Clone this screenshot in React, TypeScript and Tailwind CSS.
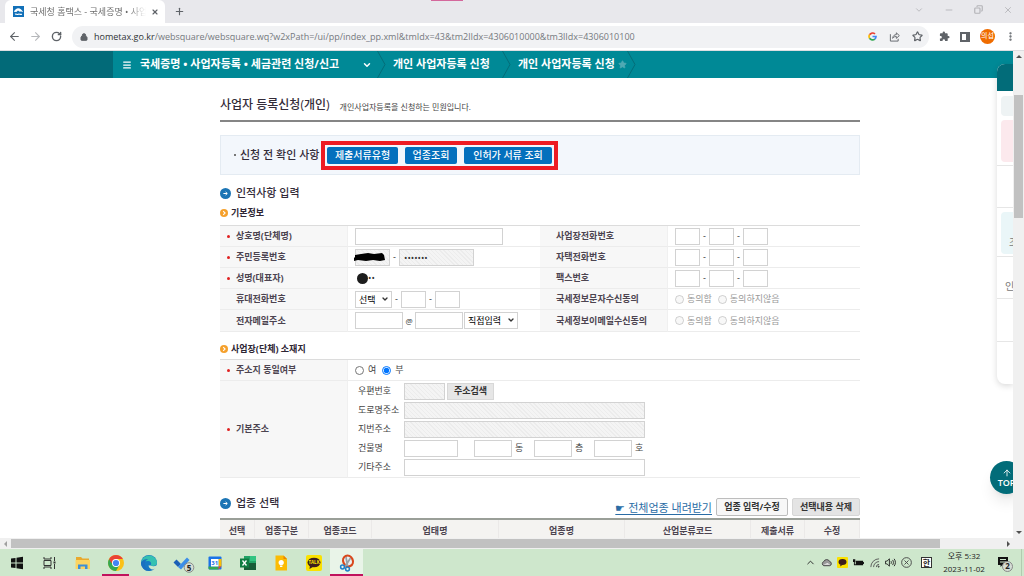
import type { ReactNode } from "react"
import { ArrowLeft, ArrowRight, RotateCw, Star, Puzzle, MoreVertical, ChevronDown, ChevronUp, Minus, Copy, X, Plus, Menu, Lock, ArrowUp } from "lucide-react"

const HATCH = "bg-[repeating-linear-gradient(45deg,#f4f4f4_0px,#f4f4f4_2px,#ececec_2px,#ececec_3px)]"

const crumbs = ["개인 사업자등록 신청", "개인 사업자등록 신청"]

const guideButtons = [
  { name: "제출서류유형", width: "w-[71px]" },
  { name: "업종조회", width: "w-[52px]" },
  { name: "인허가 서류 조회", width: "w-[88px]" },
]

const columns = [
  { name: "선택", width: "w-[35px]" },
  { name: "업종구분", width: "w-[54px]" },
  { name: "업종코드", width: "w-[63px]" },
  { name: "업태명", width: "w-[127px]" },
  { name: "업종명", width: "w-[126px]" },
  { name: "산업분류코드", width: "w-[126px]" },
  { name: "제출서류", width: "w-[54px]" },
  { name: "수정", width: "w-[55px]" },
]

function TextBox({ label, className = "", filled = false, value, type = "text" }: { label: string; className?: string; filled?: boolean; value?: string; type?: string }) {
  return (
    <input
      type={type}
      aria-label={label}
      readOnly={filled}
      defaultValue={value}
      className={`h-[17px] shrink-0 border border-[#d2d2d2] px-1 text-[9px] text-[#333] outline-none ${filled ? HATCH : "bg-white"} ${className}`}
    />
  )
}

function Dropdown({ label, option, className }: { label: string; option: string; className: string }) {
  return (
    <div className={`relative shrink-0 ${className}`}>
      <select aria-label={label} className="block h-[17px] w-full appearance-none border border-[#d2d2d2] bg-white pl-[3px] text-[9px] leading-[15px] text-black outline-none">
        <option>{option}</option>
      </select>
      <ChevronDown className="pointer-events-none absolute top-1 right-[3px] size-2" strokeWidth={4} />
    </div>
  )
}

function Dash() {
  return <span className="w-[9px] shrink-0 text-center">-</span>
}

function PhoneBoxes({ label }: { label: string }) {
  return (
    <div className="flex items-center">
      <TextBox label={`${label} 앞자리`} className="w-[25px]" />
      <Dash />
      <TextBox label={`${label} 가운데`} className="w-[25px]" />
      <Dash />
      <TextBox label={`${label} 뒷자리`} className="w-[25px]" />
    </div>
  )
}

function Agreement({ name }: { name: string }) {
  return (
    <div className="flex items-center gap-[6px] text-[#999]">
      {["동의함", "동의하지않음"].map((text) => (
        <label key={text} className="flex items-center gap-[3px]">
          <input type="radio" name={name} disabled className="size-[9px]" />
          {text}
        </label>
      ))}
    </div>
  )
}

function Th({ children, required = false, height = "h-[21px]" }: { children: ReactNode; required?: boolean; height?: string }) {
  return (
    <th scope="row" className={`w-1/5 border-r border-b border-r-[#f0f0f0] border-b-[#ececec] bg-[#f7f7f7] p-0 text-left font-bold text-[#4c4450] ${height}`}>
      <div className="flex items-center">
        <span className="flex w-4 justify-center">{required && <i className="size-[3px] rounded-full bg-[#e02020]" />}</span>
        {children}
      </div>
    </th>
  )
}

function Td({ children }: { children: ReactNode }) {
  return <td className="w-[30%] border-b border-[#ececec] py-0 pr-0 pl-[7px]">{children}</td>
}

function SectionTitle({ children }: { children: ReactNode }) {
  return (
    <h2 className="flex h-4 items-center gap-[5px] text-[11px] font-medium text-[#332b38]">
      <svg viewBox="0 0 11 11" className="size-[11px]">
        <circle cx="5.5" cy="5.5" r="5.5" fill="#1c75b5" />
        <path d="M3.4 5.5h3.6M5.6 4l1.7 1.5L5.600 7" stroke="#fff" fill="none" strokeWidth="1" />
      </svg>
      {children}
    </h2>
  )
}

function SubTitle({ children }: { children: ReactNode }) {
  return (
    <h3 className="flex h-4 items-center gap-[3px] text-[9px] font-bold text-[#2d2533]">
      <svg viewBox="0 0 8 8" className="size-2">
        <circle cx="4" cy="4" r="4" fill="#f5a02c" />
        <path d="M3.2 2.1 5.1 4 3.2 5.9" stroke="#fff" fill="none" strokeWidth="1.1" />
      </svg>
      {children}
    </h3>
  )
}

function BrowserChrome() {
  return (
    <header className="shrink-0 text-[#5f6368]">
      <div className="relative flex h-[23px] items-center bg-[#e8e8ec] pl-[5px]">
        <i className="absolute top-0 left-[431px] h-px w-8 bg-[#d4689c]" />
        <div className="flex h-full w-[160px] items-center rounded-t-md bg-white pr-[6px] pl-2">
          <svg viewBox="0 0 11 11" className="size-[11px] shrink-0">
            <rect width="11" height="11" fill="#1270b8" />
            <path d="M.8 5.800C2 3.500 3.500 2.200 5.200 2.200c2 0 3.500 1.600 5 4-1.400-.9-2.400-1-3.400-.4L5 4.600 3.400 6z" fill="#fff" />
            <path d="M2 8.300c1.200-.8 2 .8 3.200 0s2 .6 3.800 0" stroke="#fff" fill="none" strokeWidth="1.200" />
          </svg>
          <span className="ml-[6px] min-w-0 flex-1 overflow-hidden bg-linear-to-r from-[#666] from-85% to-transparent bg-clip-text text-[9px] whitespace-nowrap text-transparent">국세청 홈택스 - 국세증명 • 사업</span>
          <button type="button" aria-label="탭 닫기" className="ml-[5px]">
            <X className="size-2" strokeWidth={3.5} />
          </button>
        </div>
        <button type="button" aria-label="새 탭" className="ml-[9px]">
          <Plus className="size-[11px]" strokeWidth={2.5} />
        </button>
        <div className="ml-auto flex gap-5 pr-[11px] pb-1 text-[#b2b2b6]">
          <button type="button" aria-label="탭 검색"><ChevronDown className="size-[10px]" /></button>
          <button type="button" aria-label="최소화"><Minus className="size-[10px]" /></button>
          <button type="button" aria-label="이전 크기로"><Copy className="size-[9px] -scale-x-100" strokeWidth={3} /></button>
          <button type="button" aria-label="닫기"><X className="size-[10px]" /></button>
        </div>
      </div>
      <div className="flex h-7 items-center border-b border-[#dcdee1] bg-white pr-[10px] pl-2">
        <div className="flex gap-2">
          <button type="button" aria-label="뒤로"><ArrowLeft className="size-[13px]" /></button>
          <button type="button" aria-label="앞으로" className="text-[#b6b8bb]"><ArrowRight className="size-[13px]" /></button>
          <button type="button" aria-label="새로고침"><RotateCw className="size-[13px] p-px" strokeWidth={3} /></button>
        </div>
        <div className="ml-[9px] flex h-[22px] min-w-0 flex-1 items-center rounded-full bg-[#f1f2f4] pr-[6px] pl-2">
          <Lock className="size-2 shrink-0" strokeWidth={3} fill="currentColor" />
          <p className="ml-[6px] min-w-0 flex-1 truncate text-[9px] text-[#75797e]">
            <span className="text-[#303236]">hometax.go.kr</span>/websquare/websquare.wq?w2xPath=/ui/pp/index_pp.xml&amp;tmIdx=43&amp;tm2lIdx=4306010000&amp;tm3lIdx=4306010100
          </p>
          <div className="flex items-center gap-3">
            <svg viewBox="0 0 18 18" className="size-[9px]" fill="none" strokeWidth="3.4">
              <path d="M3.1 5.5A7 7 0 0 1 14 4" stroke="#ea4335" />
              <path d="M3.1 5.5a7 7 0 0 0 0 7" stroke="#fbbc05" />
              <path d="M3.1 12.5A7 7 0 0 0 13.6 14.2" stroke="#34a853" />
              <path d="M9 9h7a7 7 0 0 1-2.4 5.2" stroke="#4285f4" />
            </svg>
            <button type="button" aria-label="공유">
              <svg viewBox="0 0 12 12" className="size-[11px]" fill="none" stroke="currentColor" strokeWidth="1">
                <path d="M1.5 3.5v7.5h8.5V8.5M4 8c.3-3 2-4 4-4V2l3.3 3L8 8V6C6 6 5 6.500 4 8z" />
              </svg>
            </button>
            <button type="button" aria-label="북마크"><Star className="size-[11px]" strokeWidth={2.6} /></button>
          </div>
        </div>
        <div className="ml-[10px] flex items-center gap-[10px]">
          <button type="button" aria-label="확장 프로그램">
            <svg viewBox="0 0 24 24" className="size-[11px]" fill="currentColor">
              <path d="M20.500 11H19V7a2 2 0 0 0-2-2h-4V3.500a2.500 2.500 0 0 0-5 0V5H4a2 2 0 0 0-2 2v3.800h1.500a2.700 2.700 0 0 1 0 5.400H2V20a2 2 0 0 0 2 2h3.800v-1.500a2.700 2.700 0 0 1 5.400 0V22H17a2 2 0 0 0 2-2v-4h1.500a2.500 2.500 0 0 0 0-5z" />
            </svg>
          </button>
          <button type="button" aria-label="측면 패널" className="h-[10px] w-[10px] border-2 border-r-4 border-[#5f6368]" />
          <button type="button" aria-label="프로필" className="flex size-[15px] items-center justify-center rounded-full bg-[#ef6c00] text-[7px] text-white">의섭</button>
          <button type="button" aria-label="메뉴"><MoreVertical className="-mr-[2px] size-[11px]" strokeWidth={3} /></button>
        </div>
      </div>
    </header>
  )
}

function Slash() {
  return (
    <svg viewBox="0 0 9 27" className="h-[27px] w-[9px] shrink-0" fill="none">
      <path d="M.5 0 8 13.500.5 27" stroke="#046c78" />
    </svg>
  )
}

function Breadcrumb() {
  return (
    <nav className="flex h-[27px] items-center bg-[#008996] text-[11px] font-bold text-white">
      <div className="h-full w-[113px] shrink-0 bg-[#026a78]" />
      <button type="button" aria-label="전체 메뉴" className="ml-[9px]">
        <Menu className="size-[10px]" strokeWidth={3} />
      </button>
      <a href="#menu" className="ml-2 flex flex-[0_0_232px] items-center justify-between">
        국세증명 • 사업자등록 • 세금관련 신청/신고
        <ChevronDown className="size-[10px]" strokeWidth={3.5} />
      </a>
      <span className="ml-[5px] flex"><Slash /></span>
      {crumbs.map((crumb, i) => (
        <div key={i} className="flex items-center">
          <a href="#crumb" className="flex w-[116px] items-center justify-between pl-[7px] whitespace-nowrap">
            {crumb}
            {i === 1 && <Star className="size-[9px] text-[#4fa9b3]" fill="currentColor" />}
          </a>
          <Slash />
        </div>
      ))}
    </nav>
  )
}

function BasicInfo() {
  return (
    <table className="mt-1 w-full table-fixed border-separate border-spacing-0 border-t border-[#dcdcdc] text-[9px] leading-3">
      <tbody>
        <tr>
          <Th required>상호명(단체명)</Th>
          <Td><TextBox label="상호명(단체명)" className="block w-[148px]" /></Td>
          <Th>사업장전화번호</Th>
          <Td><PhoneBoxes label="사업장전화번호" /></Td>
        </tr>
        <tr>
          <Th required>주민등록번호</Th>
          <Td>
            <div className="relative flex items-center">
              <TextBox label="주민등록번호 앞자리" filled className="w-[35px]" />
              <svg viewBox="0 0 32 10" className="absolute left-[-1px] h-[10px] w-8">
                <path d="M1 3 7 2l7-1 6 1 8-1 2 2 1 5-5 1-7-1-7 1-8-1-4 1-1-2 2-2z" fill="#000" />
              </svg>
              <Dash />
              <TextBox label="주민등록번호 뒷자리" filled value="•••••••" className="w-[75px]" />
            </div>
          </Td>
          <Th>자택전화번호</Th>
          <Td><PhoneBoxes label="자택전화번호" /></Td>
        </tr>
        <tr>
          <Th required>성명(대표자)</Th>
          <Td>
            <div className="flex items-center pl-[2px]">
              <i className="size-[11px] rounded-full bg-[#1d1d1d]" />
              <span>••</span>
            </div>
          </Td>
          <Th>팩스번호</Th>
          <Td><PhoneBoxes label="팩스번호" /></Td>
        </tr>
        <tr>
          <Th>휴대전화번호</Th>
          <Td>
            <div className="flex items-center">
              <Dropdown label="휴대전화 국번" option="선택" className="w-[37px]" />
              <Dash />
              <TextBox label="휴대전화번호 가운데" className="w-[25px]" />
              <Dash />
              <TextBox label="휴대전화번호 뒷자리" className="w-[25px]" />
            </div>
          </Td>
          <Th>국세정보문자수신동의</Th>
          <Td><Agreement name="sms" /></Td>
        </tr>
        <tr>
          <Th height="h-[22px]">전자메일주소</Th>
          <Td>
            <div className="flex items-center">
              <TextBox label="전자메일 아이디" className="w-12" />
              <span className="w-3 text-center text-[8px]">@</span>
              <TextBox label="전자메일 도메인" className="w-12" />
              <Dropdown label="도메인 선택" option="직접입력" className="ml-px w-[54px]" />
            </div>
          </Td>
          <Th height="h-[22px]">국세정보이메일수신동의</Th>
          <Td><Agreement name="mail" /></Td>
        </tr>
      </tbody>
    </table>
  )
}

function AddressRow({ label, children }: { label: string; children: ReactNode }) {
  return (
    <div className="flex items-center">
      <span className="w-[46px] shrink-0">{label}</span>
      {children}
    </div>
  )
}

function AddressTable() {
  return (
    <table className="mt-[2px] w-full table-fixed border-separate border-spacing-0 border-t border-[#dcdcdc] text-[9px] leading-3 text-[#444]">
      <tbody>
        <tr>
          <Th required>주소지 동일여부</Th>
          <td className="border-b border-[#ececec] py-0 pr-0 pl-[7px]">
            <div className="flex gap-[6px]">
              <label className="flex items-center gap-1"><input type="radio" name="same" className="size-[9px]" />여</label>
              <label className="flex items-center gap-1"><input type="radio" name="same" defaultChecked className="size-[9px]" />부</label>
            </div>
          </td>
        </tr>
        <tr>
          <Th required height="h-[97px]">기본주소</Th>
          <td className="border-b border-[#ececec] py-0 pr-0 pl-[10px]">
            <div className="flex flex-col gap-[2px]">
              <AddressRow label="우편번호">
                <TextBox label="우편번호" filled className="w-[41px]" />
                <button type="button" className="ml-[2px] h-[17px] w-[47px] border border-[#d8d8d8] bg-[#e6e6e6] font-bold text-[#333]">주소검색</button>
              </AddressRow>
              <AddressRow label="도로명주소"><TextBox label="도로명주소" filled className="w-[241px]" /></AddressRow>
              <AddressRow label="지번주소"><TextBox label="지번주소" filled className="w-[241px]" /></AddressRow>
              <AddressRow label="건물명">
                <TextBox label="건물명" className="mr-4 w-[54px]" />
                {["동", "층", "호"].map((unit) => (
                  <label key={unit} className="flex w-[60px] items-center gap-[3px]">
                    <input type="text" className="h-[17px] w-[38px] border border-[#d2d2d2] bg-white" />
                    {unit}
                  </label>
                ))}
              </AddressRow>
              <AddressRow label="기타주소"><TextBox label="기타주소" className="w-[241px]" /></AddressRow>
            </div>
          </td>
        </tr>
      </tbody>
    </table>
  )
}

function Content() {
  return (
    <main className="w-full max-w-[860px] pl-[220px]">
      <div className="flex h-11 items-center gap-[10px] border-b-2 border-[#858585] pt-3 text-[#332b38]">
        <h1 className="text-xs font-medium">사업자 등록신청(개인)</h1>
        <p className="pt-[3px] text-[8px] text-[#444]">개인사업자등록을 신청하는 민원입니다.</p>
      </div>

      <div className="mt-[13px] flex h-10 items-center border border-[#e4ebf2] bg-[#f3f7fc] pl-[13px] text-[11px] font-medium text-[#332b38]">
        <i className="mr-1 size-[2px] bg-[#777]" />
        <span className="w-20 whitespace-nowrap">신청 전 확인 사항</span>
        <div className="ml-px flex gap-[7px] border-4 border-[#ed1c24] px-[2px] py-[2px]">
          {guideButtons.map((btn) => (
            <button key={btn.name} type="button" className={`h-[17px] rounded-xs bg-[#0470bd] text-[10px] leading-4 font-medium whitespace-nowrap text-white ${btn.width}`}>
              {btn.name}
            </button>
          ))}
        </div>
      </div>

      <div className="mt-[10px]"><SectionTitle>인적사항 입력</SectionTitle></div>
      <div className="mt-1"><SubTitle>기본정보</SubTitle></div>
      <BasicInfo />

      <div className="mt-[9px]"><SubTitle>사업장(단체) 소재지</SubTitle></div>
      <AddressTable />

      <div className="mt-[17px] flex h-[21px] items-end">
        <div className="mr-auto self-start"><SectionTitle>업종 선택</SectionTitle></div>
        <a href="#download" className="mr-1 text-[11px] leading-4 text-[#2a6ca5] underline underline-offset-2">☛ 전체업종 내려받기</a>
        <button type="button" className="mr-1 h-[18px] w-[72px] rounded-xs border border-[#bdbdbd] bg-[#f7f7f7] text-[9px] font-bold text-[#333]">업종 입력/수정</button>
        <button type="button" className="h-[18px] w-[68px] rounded-xs border border-[#d6d6d6] bg-[#e4e4e4] text-[9px] font-bold text-[#333]">선택내용 삭제</button>
      </div>
      <table className="mt-[2px] w-full table-fixed border-separate border-spacing-0 border-t-2 border-[#9a9f98] text-[9px]">
        <thead>
          <tr>
            {columns.map((col) => (
              <th key={col.name} scope="col" className={`h-[22px] border-r border-[#ebe9e8] bg-[#f4f3f1] p-0 font-bold text-[#4c4450] ${col.width}`}>{col.name}</th>
            ))}
          </tr>
        </thead>
      </table>
    </main>
  )
}

function QuickPanel() {
  return (
    <aside className="absolute top-[13px] right-0 h-80 w-4 overflow-hidden rounded-l-lg bg-white text-[10px] whitespace-nowrap text-[#777] shadow-[0_2px_6px_rgba(0,0,0,0.15)]">
      <div className="h-[27px] bg-[#026c79]" />
      <div className="flex h-[75px] flex-col gap-1 border-b border-[#e6e6e6] pt-[5px] pl-1">
        <div className="h-5 rounded-l bg-[#eef3f4]" />
        <div className="h-[42px] rounded-l bg-[#fce9ed]" />
      </div>
      <div className="h-[42px] border-b border-[#e6e6e6]" />
      <div className="h-[49px] border-b border-[#e6e6e6] pt-1 pl-1">
        <div className="h-[42px] overflow-hidden rounded-l bg-[#eaf6f8] pt-6 pl-2 leading-3">조</div>
      </div>
      <div className="h-[42px] border-b border-[#e6e6e6] pt-[23px] pl-2 leading-3">인</div>
      <div className="h-[43px] border-b border-[#e6e6e6]" />
    </aside>
  )
}

function TopButton() {
  return (
    <button type="button" className="absolute right-[-10px] bottom-[44px] flex size-[33px] flex-col items-center justify-center rounded-full bg-[#026c79] text-[9px] leading-[10px] font-semibold text-white shadow-lg">
      <ArrowUp className="size-[10px]" />
      TOP
    </button>
  )
}

const taskIcons = [
  {
    name: "시작",
    icon: <path d="M4 5.600 8.500 4.900v4.600H4zM9.500 4.800l6.500-1v5.700H9.500zM4 10.500h4.500v4.600L4 14.400zM9.500 10.500H16v5.700l-6.500-1z" fill="#111" />,
  },
  {
    name: "작업 보기",
    icon: (
      <g fill="none" stroke="#333">
        <path d="M4 4v2h7V4M4 16v-2h7v2M4 7.500h7v5H4zM14.500 4v4M14.500 11v5" />
        <path d="M13.500 9.500h2" strokeWidth="2" />
      </g>
    ),
  },
  {
    name: "파일 탐색기",
    icon: (
      <>
        <path d="M3 4h5l1.500 1.500H16V9H3z" fill="#e9a92d" />
        <path d="M2.500 7H17v9H2.500z" fill="#fcd462" />
        <path d="M5 16v-4.500h9.500V16H12v-2.500H7.500V16z" fill="#3d8fd8" />
      </>
    ),
  },
  {
    name: "Chrome",
    active: true,
    icon: (
      <>
        <circle cx="10" cy="10" r="8" fill="#fbc116" />
        <path d="M10 10 3.100 6A8 8 0 0 0 10 18l3.500-6z" fill="#34a853" />
        <path d="M3.100 6A8 8 0 0 1 16.900 6H10v4H5.400z" fill="#ea4335" />
        <circle cx="10" cy="10" r="4" fill="#fff" />
        <circle cx="10" cy="10" r="3.100" fill="#4285f4" />
      </>
    ),
  },
  {
    name: "Edge",
    icon: (
      <>
        <circle cx="10" cy="10" r="8" fill="#1779c4" />
        <path d="M2.200 9A8 8 0 0 1 18 9.500c0 3-3 4-6.500 3 1.500-2 .5-4.500-2.500-4.500-3 0-6 1-6.800 1z" fill="#35c1b1" />
        <path d="M2 10c1-3 4-4.500 7-3.500-3 1-4 4-2.500 7 1 2 3 3.500 6 4A8 8 0 0 1 2 10z" fill="#1b6fc0" />
        <path d="M11.500 12.500c2 1.200 4.500 1 6.200-.2l.8 2-3.500 2c-3 .5-5-1-5.500-3.800z" fill="#cde7cc" />
      </>
    ),
  },
  {
    name: "할 일",
    icon: (
      <>
        <path d="m1.500 9.500 3-3 4.500 4.500-3 3z" fill="#1b5fb5" />
        <path d="m6 14 9-9.500L17.500 7 9 16.500z" fill="#3b8de8" />
        <circle cx="17" cy="14.500" r="4.800" fill="#d6ded5" stroke="#777" strokeWidth=".8" />
        <text x="17" y="17.500" fontSize="8" fontWeight="700" textAnchor="middle" fill="#222">5</text>
      </>
    ),
  },
  {
    name: "캘린더",
    icon: (
      <>
        <rect x="3.500" y="3.500" width="13" height="13" rx="1" fill="#1a73e8" />
        <path d="M13.500 6h3v7.500h-3z" fill="#fbbc04" />
        <path d="M3.500 13.500h10v3h-9l-1-1z" fill="#34a853" />
        <path d="M13.500 13.500h3l-3 3z" fill="#ea4335" />
        <path d="M6 6h7.500v7.500H6z" fill="#fff" />
        <text x="9.800" y="12" fontSize="6" fontWeight="700" textAnchor="middle" fill="#1a73e8">31</text>
      </>
    ),
  },
  {
    name: "Excel",
    icon: (
      <>
        <path d="M6 3h12v14H6z" fill="#21a366" />
        <path d="M6 10h12v7H6z" fill="#185c37" />
        <path d="M12 3h6v5h-6z" fill="#33c481" />
        <path d="M2 5.500h9v9H2z" fill="#107c41" />
        <path d="m4.500 7.500 4 5M8.500 7.500l-4 5" stroke="#fff" strokeWidth="1.300" />
      </>
    ),
  },
  {
    name: "Keep",
    icon: (
      <>
        <path d="M4.500 2.500h8l3.500 3.500v11.500H4.500z" fill="#fbbc04" />
        <path d="M12.500 2.500 16 6h-3.500z" fill="#ea8600" />
        <circle cx="10.200" cy="9.500" r="2.600" fill="#fff" />
        <path d="M9 12.500h2.400v1.500H9z" fill="#fff" />
      </>
    ),
  },
  {
    name: "카카오톡",
    icon: (
      <>
        <rect x="2" y="2" width="16" height="16" rx="2" fill="#fae100" />
        <ellipse cx="10" cy="9.500" rx="6.500" ry="4.800" fill="#3c1e1e" />
        <path d="m6 12-.5 4 4-2.500z" fill="#3c1e1e" />
        <text x="10" y="11.300" fontSize="4.500" fontWeight="700" textAnchor="middle" fill="#fae100">TALK</text>
      </>
    ),
  },
  {
    name: "캡처 도구",
    active: true,
    focused: true,
    icon: (
      <>
        <ellipse cx="11" cy="8" rx="4.800" ry="5.500" transform="rotate(-25 11 8)" fill="#eceff0" stroke="#d9481c" strokeWidth="2.200" />
        <path d="m9 4 1.500 9M13.500 5 8.500 13" stroke="#98a2a8" strokeWidth="1.700" />
        <circle cx="5.500" cy="14" r="1.900" fill="none" stroke="#1f7fc9" strokeWidth="1.500" />
        <circle cx="10.500" cy="16" r="1.900" fill="none" stroke="#1f7fc9" strokeWidth="1.500" />
      </>
    ),
  },
]

function Taskbar() {
  return (
    <footer className="flex h-[27px] shrink-0 items-stretch bg-[#cee7cc] text-[#222]">
      {taskIcons.map((item) => (
        <button
          key={item.name}
          type="button"
          aria-label={item.name}
          className={`flex w-[33px] justify-center pt-1 ${item.focused ? "bg-[#e9f4e8]" : ""}`}
        >
          <span className={`flex h-[23px] justify-center ${item.active ? "border-b-2 border-[#c0125d]" : ""} ${item.focused ? "w-full" : "w-[27px]"}`}>
            <svg viewBox="0 0 20 20" className="size-5 shrink-0 overflow-visible">{item.icon}</svg>
          </span>
        </button>
      ))}
      <div className="ml-auto flex items-center gap-[5px] pr-[2px]">
        <ChevronUp className="size-[11px]" />
        <svg viewBox="0 0 12 12" className="size-[11px]">
          <path d="M3 9.500a2.400 2.400 0 0 1 0-4.500 3.500 3.500 0 0 1 6.500 0A2.300 2.300 0 0 1 9.500 9.500z" fill="#999" stroke="#444" />
          <path d="M2.500 8.500 7 6.500l3 2z" fill="#eee" />
        </svg>
        <svg viewBox="0 0 11 11" className="size-[11px]">
          <rect width="11" height="11" rx="1" fill="#fae100" />
          <ellipse cx="5.500" cy="5" rx="4" ry="3" fill="#3c1e1e" />
          <path d="m3.500 7-.3 2.500L6 7.500z" fill="#3c1e1e" />
        </svg>
        <svg viewBox="0 0 12 12" className="size-[11px]">
          <path d="M3 4h8v5H3zM0 2.500h2.500v3H0zM1 5h1v3h2v1H1z" fill="#111" />
          <path d="M11 5.500h1v2h-1z" fill="#111" />
        </svg>
        <svg viewBox="0 0 12 12" className="size-[11px]" fill="none" stroke="#555">
          <path d="M2 11A9 9 0 0 1 11 2M5 11a6 6 0 0 1 6-6M8 11a3 3 0 0 1 3-3" />
          <circle cx="10.500" cy="10.500" r=".6" fill="#222" />
        </svg>
        <svg viewBox="0 0 12 12" className="size-[11px]" fill="none" stroke="#222">
          <path d="M.5 4.500h1.700L4.800 2v8L2.200 7.500H.5zM6.500 4.500c.6 1 .6 2 0 3M8.300 3.200c1.200 1.800 1.200 3.800 0 5.600M10 2c1.800 2.600 1.800 5.400 0 8" />
        </svg>
        <svg viewBox="0 0 12 12" className="size-[11px]" fill="none" stroke="#444">
          <circle cx="6" cy="6" r="5.300" />
          <path d="m3.800 3.800 4.400 4.400M8.200 3.800 3.800 8.200" />
        </svg>
        <span className="ml-1 flex size-[11px] items-center justify-center border border-[#333] bg-white text-[8px] font-bold">한</span>
        <div className="ml-[2px] w-[50px] pb-[2px] text-center text-[8px] leading-[13px] whitespace-nowrap">
          <div>오후 5:32</div>
          <div>2023-11-02</div>
        </div>
        <div className="relative mx-[3px]">
          <svg viewBox="0 0 16 16" className="size-4">
            <path d="M1 2h10v8H5.500L3.500 12v-2H1z" fill="#111" />
            <path d="M3 4.500h6M3 7h6" stroke="#cee7cc" />
          </svg>
          <span className="absolute top-[6px] left-[5px] flex size-[11px] items-center justify-center rounded-full border border-[#888] bg-[#d5ddd4] text-[8px] font-bold">2</span>
        </div>
        <i className="h-full w-px bg-[#b2cbb0]" />
      </div>
    </footer>
  )
}

export default function App() {
  return (
    <div className="flex h-screen flex-col overflow-hidden bg-white font-['Open_Sans','Noto_Sans_CJK_KR',sans-serif] text-[#333]">
      <BrowserChrome />
      <div className="flex min-h-0 flex-1">
        <div className="relative min-w-0 flex-1 overflow-hidden">
          <Breadcrumb />
          <Content />
          <QuickPanel />
          <TopButton />
        </div>
        <div className="flex w-[11px] shrink-0 flex-col items-center bg-[#f0f0f0]">
          <i className="mt-1 border-x-[3px] border-b-[3px] border-x-transparent border-b-[#505050]" />
          <div className="mt-[37px] h-[123px] w-[9px] bg-[#c1c1c1]" />
          <i className="mt-auto mb-1 border-x-[3px] border-t-[3px] border-x-transparent border-t-[#505050]" />
        </div>
      </div>
      <div className="flex h-[11px] shrink-0 items-center bg-[#f0f0f0]">
        <i className="mx-1 border-y-[3px] border-r-[3px] border-y-transparent border-r-[#a0a0a0]" />
        <div className="h-[9px] flex-1 bg-[#c1c1c1]" />
        <i className="mr-[14px] ml-[67px] border-y-[3px] border-l-[3px] border-y-transparent border-l-[#505050]" />
      </div>
      <Taskbar />
    </div>
  )
}
